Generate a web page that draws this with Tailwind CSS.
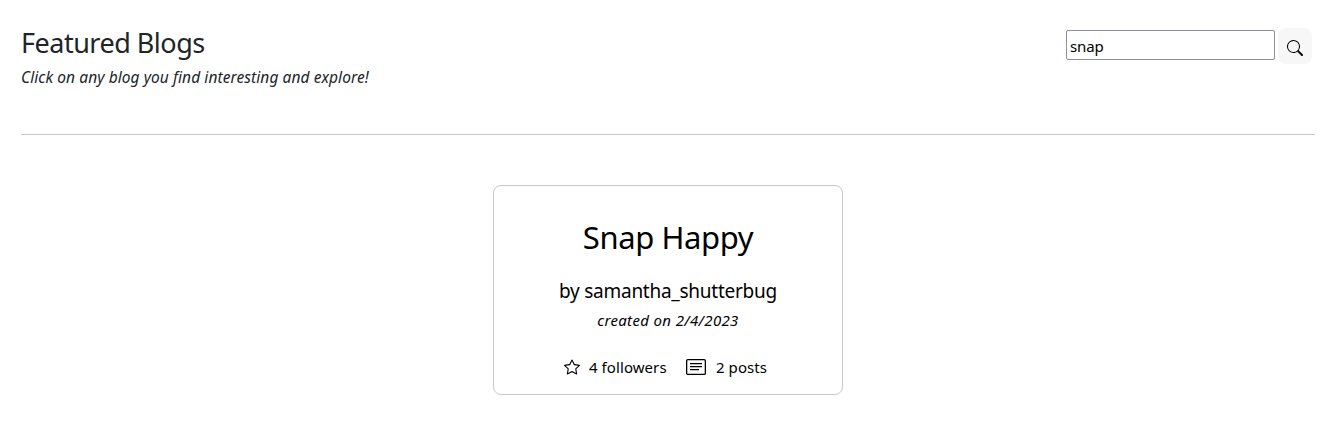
<!DOCTYPE html>
<html lang="en">
<head>
<meta charset="utf-8">
<title>Featured Blogs</title>
<script src="https://cdn.jsdelivr.net/npm/@tailwindcss/browser@4"></script>
</head>
<body class="bg-white font-['Noto_Sans','Open_Sans',sans-serif] text-black">
<header class="mx-[21px] flex h-[135px] items-start justify-between border-b border-[#c8c8c8] pt-[26px] text-[#212529]">
  <div>
    <h1 class="text-[27px] leading-[34px] tracking-[-0.5px]">Featured Blogs</h1>
    <p class="mt-[5px] text-[15.5px] leading-6 italic tracking-[0.08px]">Click on any blog you find interesting and explore!</p>
  </div>
  <form class="mr-[3px] flex items-start gap-[3px] pt-[2px] text-black">
    <input type="text" value="snap" aria-label="Search blogs" class="mt-[2px] h-[30px] w-[209px] rounded-[2px] border border-[#8f8f9d] bg-white px-[3px] pt-[2px] text-[15px] tracking-[-0.1px]">
    <button type="button" aria-label="Search" class="flex h-9 w-[34px] items-center justify-center rounded-lg bg-[#f7f7f7] pt-[3px]">
      <svg class="size-4" viewBox="0 0 16 16" fill="currentColor"><path d="M11.742 10.344a6.5 6.5 0 1 0-1.397 1.398h-.001c.03.04.062.078.098.115l3.85 3.85a1 1 0 0 0 1.415-1.414l-3.85-3.85a1.007 1.007 0 0 0-.115-.1zM12 6.5a5.5 5.5 0 1 1-11 0 5.5 5.5 0 0 1 11 0z"/></svg>
    </button>
  </form>
</header>
<main class="mt-[50px] flex justify-center">
  <article class="flex h-[210px] w-[350px] flex-col items-center rounded-lg border border-[#c8c8c8] pt-[31px]">
    <h2 class="text-[31px] leading-[40px] tracking-[-0.4px]">Snap Happy</h2>
    <p class="mt-[19px] text-[19px] leading-[30px] tracking-[-0.26px]">by samantha_shutterbug</p>
    <p class="mt-[2px] text-[15px] leading-6 italic tracking-[0.35px]">created on 2/4/2023</p>
    <div class="mt-[23px] flex items-center text-[15px] leading-6 tracking-[0.07px]">
      <svg class="mr-[9px] size-4" viewBox="0 0 16 16" fill="currentColor"><path d="M2.866 14.85c-.078.444.36.791.746.593l4.39-2.256 4.389 2.256c.386.198.824-.149.746-.592l-.83-4.73 3.522-3.356c.33-.314.16-.888-.282-.95l-4.898-.696L8.465.792a.513.513 0 0 0-.927 0L5.354 5.12l-4.898.696c-.441.062-.612.636-.283.95l3.523 3.356-.83 4.73zm4.905-2.767-3.686 1.894.694-3.957a.565.565 0 0 0-.163-.505L1.71 6.745l4.052-.576a.525.525 0 0 0 .393-.288L8 2.223l1.847 3.658a.525.525 0 0 0 .393.288l4.052.575-2.906 2.77a.565.565 0 0 0-.163.506l.694 3.957-3.686-1.894a.503.503 0 0 0-.461 0z"/></svg>
      <span class="w-[97px] whitespace-nowrap">4 followers</span>
      <svg class="mr-[10px] h-4 w-5" viewBox="0 0 20 16" fill="none" stroke="currentColor"><rect x=".65" y=".65" width="18.7" height="14.7" rx="1.2" stroke-width="1.3"/><path d="M4 4.7h12M4 7.7h12M4 10.7h9" stroke-width="1.3"/></svg>
      <span class="w-[56px] whitespace-nowrap">2 posts</span>
    </div>
  </article>
</main>
</body>
</html>
